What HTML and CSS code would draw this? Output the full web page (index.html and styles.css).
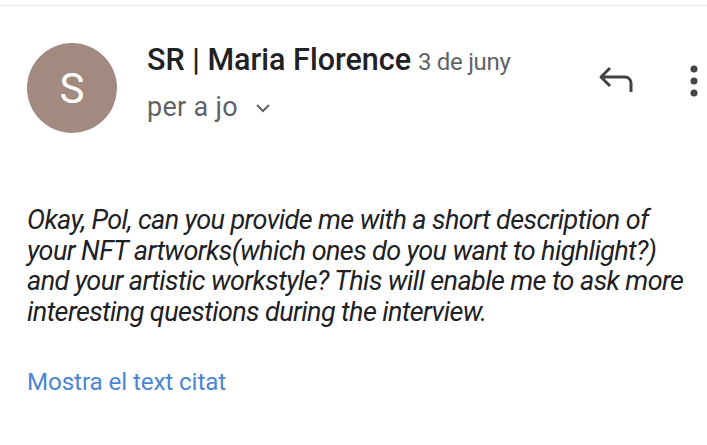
FILE: index.html
```html
<!DOCTYPE html>
<html>
<head>
<meta charset="utf-8">
<link rel="stylesheet" href="styles.css">
</head>
<body>
<div class="topline"></div>
<div class="header">
  <div class="avatar">S</div>
  <div class="meta">
    <div class="from"><span class="name">SR | Maria Florence</span> <span class="date">3 de juny</span></div>
    <div class="to">per a jo <svg class="chev" width="16" height="10" viewBox="0 0 16 10"><path d="M2 2 L8 8 L14 2" fill="none" stroke="#5f6368" stroke-width="2"/></svg></div>
  </div>
  <div class="actions">
    <svg class="reply" width="40" height="34" viewBox="0 0 40 34"><path d="M12 3 L3 12 L12 21 M3 12 H27 A6 6 0 0 1 33 18 V27" fill="none" stroke="#444" stroke-width="3" stroke-linejoin="round"/></svg>
    <svg class="more" width="10" height="32" viewBox="0 0 10 32"><circle cx="5" cy="4" r="3.5" fill="#444"/><circle cx="5" cy="16" r="3.5" fill="#444"/><circle cx="5" cy="28" r="3.5" fill="#444"/></svg>
  </div>
</div>
<div class="body">Okay, Pol, can you provide me with a short description of your NFT artworks(which ones do you want to highlight?) and your artistic workstyle? This will enable me to ask more interesting questions during the interview.</div>
<div class="link">Mostra el text citat</div>
</body>
</html>
```
FILE: styles.css
```css
html, body { margin: 0; padding: 0; background: #fff; }
body { width: 707px; height: 445px; overflow: hidden; font-family: Roboto, "Liberation Sans", sans-serif; }
.topline { height: 5px; border-bottom: 1px solid #ececec; }
.header { display: flex; align-items: flex-start; padding: 37px 0 0 27px; }
.avatar { width: 90px; height: 90px; border-radius: 50%; background: #a38a80; color: #fff; font-size: 42px; display: flex; align-items: center; justify-content: center; flex-shrink: 0; }
.meta { margin-left: 30px; padding-top: 0; }
.from { white-space: nowrap; line-height: 34px; }
.name { font-size: 30.5px; font-weight: 500; color: #202124; letter-spacing: 0; }
.date { font-size: 24px; color: #5f6368; letter-spacing: -0.3px; margin-left: 3px; }
.to { font-size: 27px; color: #5f6368; line-height: 34px; margin-top: 8px; letter-spacing: 0.3px; }
.chev { margin-left: 10px; vertical-align: 3px; }
.actions { margin-left: auto; display: flex; align-items: flex-start; padding-top: 22px; padding-right: 8px; }
.reply { margin-right: 51px; margin-top: 0; }
.body { margin: 72px 12px 0 27px; font-size: 27px; font-style: italic; line-height: 30.5px; color: #202124; letter-spacing: -0.6px; }
.link { margin: 41px 27px 0; font-size: 24.2px; color: #4a86d4; letter-spacing: -0.1px; }
```
